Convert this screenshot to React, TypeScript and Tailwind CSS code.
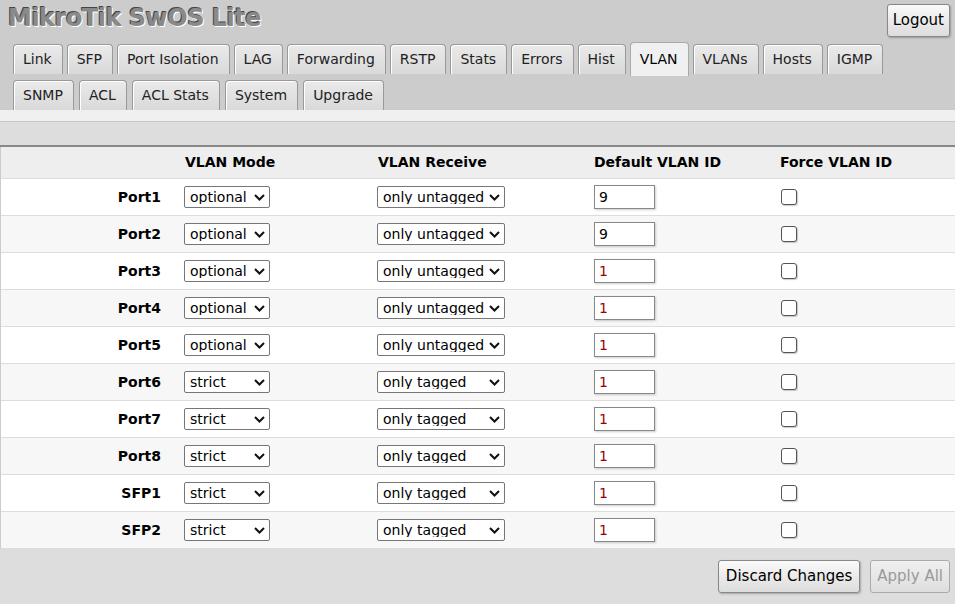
import { useState } from 'react';

interface PortRow {
  name: string;
  mode: string;
  receive: string;
  vid: string;
  force: boolean;
}

const tabsRow1 = ['Link', 'SFP', 'Port Isolation', 'LAG', 'Forwarding', 'RSTP', 'Stats', 'Errors', 'Hist', 'VLAN', 'VLANs', 'Hosts', 'IGMP'];
const tabsRow2 = ['SNMP', 'ACL', 'ACL Stats', 'System', 'Upgrade'];

const initialRows: PortRow[] = [
  { name: 'Port1', mode: 'optional', receive: 'only untagged', vid: '9', force: false },
  { name: 'Port2', mode: 'optional', receive: 'only untagged', vid: '9', force: false },
  { name: 'Port3', mode: 'optional', receive: 'only untagged', vid: '1', force: false },
  { name: 'Port4', mode: 'optional', receive: 'only untagged', vid: '1', force: false },
  { name: 'Port5', mode: 'optional', receive: 'only untagged', vid: '1', force: false },
  { name: 'Port6', mode: 'strict', receive: 'only tagged', vid: '1', force: false },
  { name: 'Port7', mode: 'strict', receive: 'only tagged', vid: '1', force: false },
  { name: 'Port8', mode: 'strict', receive: 'only tagged', vid: '1', force: false },
  { name: 'SFP1', mode: 'strict', receive: 'only tagged', vid: '1', force: false },
  { name: 'SFP2', mode: 'strict', receive: 'only tagged', vid: '1', force: false },
];

function Tab({ label, active }: { label: string; active?: boolean }) {
  if (active) {
    return (
      <div className="h-[34px] -mb-[2px] pl-[9px] pr-[10px] flex items-center border border-b-0 border-[#aaa] rounded-t-[4px] bg-[#f0f0f0] text-black relative z-10">
        {label}
      </div>
    );
  }
  return (
    <div className="h-[30px] pl-[9px] pr-[10px] flex items-center border border-b-0 border-[#999] rounded-t-[4px] bg-gradient-to-b from-[#eaeaea] to-[#d9d9d9] shadow-[inset_1px_1px_0_#fff] text-[#222] cursor-pointer">
      {label}
    </div>
  );
}

function Chevron() {
  return (
    <svg width="11" height="7" viewBox="0 0 11 7" className="pointer-events-none absolute right-[5px] top-[8px]">
      <path d="M1 1l4.5 4.5L10 1" fill="none" stroke="#111" strokeWidth="2" />
    </svg>
  );
}

function Select({ value, options, width, onChange }: { value: string; options: string[]; width: string; onChange: (v: string) => void }) {
  return (
    <div className={`relative ${width}`}>
      <select
        value={value}
        onChange={(e) => onChange(e.target.value)}
        className="appearance-none w-full h-[22px] border border-[#767676] rounded-[2px] bg-white pl-[5px] pr-5 text-[14px] leading-none text-black outline-none"
      >
        {options.map((o) => (
          <option key={o} value={o}>{o}</option>
        ))}
      </select>
      <Chevron />
    </div>
  );
}

export default function App() {
  const [rows, setRows] = useState<PortRow[]>(initialRows);

  const update = (i: number, patch: Partial<PortRow>) => {
    setRows((prev) => prev.map((r, idx) => (idx === i ? { ...r, ...patch } : r)));
  };

  return (
    <div className="w-[955px] h-[604px] bg-[#dddddd] font-['DejaVu_Sans',Verdana,sans-serif] text-[14px] text-black overflow-hidden">
      {/* Header */}
      <div className="bg-[#cccccc]">
        <div className="h-[41px] flex items-start justify-between pl-[8px] pr-[5px]">
          <h1 className="mt-[3px] text-[24px] font-bold tracking-[-0.5px] text-[#8a8a8a] leading-[30px] [text-shadow:-1px_-1px_0_#444,1px_1px_0_#fff]">
            MikroTik SwOS Lite
          </h1>
          <button className="mt-[4px] h-[33px] px-[5px] text-[15px] border border-[#888] rounded-[3px] bg-gradient-to-b from-[#fafafa] to-[#dcdcdc] shadow-[1px_1px_2px_rgba(0,0,0,0.25)]">
            Logout
          </button>
        </div>
        <div className="pl-[13px] flex gap-[4px] items-end h-[33px]">
          {tabsRow1.map((t) => (
            <Tab key={t} label={t} active={t === 'VLAN'} />
          ))}
        </div>
        <div className="pl-[13px] pt-[6px] flex gap-[5px] items-end">
          {tabsRow2.map((t) => (
            <Tab key={t} label={t} />
          ))}
        </div>
      </div>

      {/* Bands */}
      <div className="h-[12px] bg-[#f0f0f0] border-b border-[#c8c8c8]" />
      <div className="h-[25px] bg-[#dddddd] border-b-2 border-[#888]" />

      {/* Table */}
      <div className="bg-white border-l border-[#ccc]">
        <div className="grid grid-cols-[183px_193px_217px_186px_1fr] h-[32px] items-center bg-[#eeeeee] border-b border-[#ddd] font-bold">
          <div />
          <div className="pl-[1px]">VLAN Mode</div>
          <div className="pl-[1px]">VLAN Receive</div>
          <div>Default VLAN ID</div>
          <div>Force VLAN ID</div>
        </div>
        {rows.map((r, i) => (
          <div
            key={r.name}
            className={`grid grid-cols-[183px_193px_217px_186px_1fr] h-[37px] items-center border-b border-[#dddddd] ${i % 2 === 0 ? 'bg-white' : 'bg-[#f7f7f7]'}`}
          >
            <div className="text-right pr-[23px] font-bold">{r.name}</div>
            <div>
              <Select value={r.mode} options={['optional', 'strict', 'enabled', 'disabled']} width="w-[86px]" onChange={(v) => update(i, { mode: v })} />
            </div>
            <div>
              <Select value={r.receive} options={['any', 'only tagged', 'only untagged']} width="w-[128px]" onChange={(v) => update(i, { receive: v })} />
            </div>
            <div>
              <input
                value={r.vid}
                onChange={(e) => update(i, { vid: e.target.value })}
                className={`w-[61px] h-[24px] bg-white border border-[#888] pl-[4px] text-[14px] outline-none shadow-[1px_1px_2px_rgba(0,0,0,0.2)] ${r.vid === '9' ? 'text-black' : 'text-[#a00000]'}`}
              />
            </div>
            <div className="pl-[1px]">
              <input
                type="checkbox"
                checked={r.force}
                onChange={(e) => update(i, { force: e.target.checked })}
                className="appearance-none block w-[16px] h-[16px] border border-[#555] rounded-[3px] bg-white shadow-[1px_1px_1px_rgba(0,0,0,0.2)] checked:bg-[#0075ff]"
              />
            </div>
          </div>
        ))}
      </div>

      {/* Footer */}
      <div className="flex justify-end gap-[10px] pr-[5px] pt-[11px]">
        <button className="h-[33px] px-[7px] text-[15px] border border-[#888] rounded-[3px] bg-gradient-to-b from-[#fafafa] to-[#dcdcdc] shadow-[1px_1px_2px_rgba(0,0,0,0.25)]">
          Discard Changes
        </button>
        <button disabled className="h-[33px] px-[6px] text-[15px] text-[#999] border border-[#aaa] rounded-[3px] bg-gradient-to-b from-[#f0f0f0] to-[#dedede]">
          Apply All
        </button>
      </div>
    </div>
  );
}
